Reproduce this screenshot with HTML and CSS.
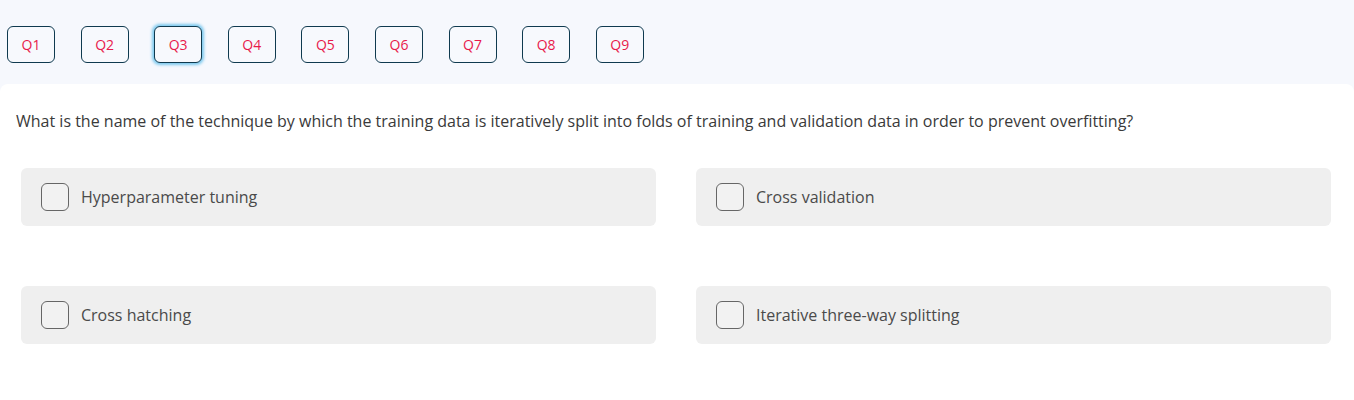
FILE: index.html
```html
<!DOCTYPE html>
<html>
    <head>
        <link rel="stylesheet" href="styles.css">
    </head>

    <body>
        <div class="topbar">
            <button class="qbtn">Q1</button>
            <button class="qbtn">Q2</button>
            <button class="qbtn active">Q3</button>
            <button class="qbtn">Q4</button>
            <button class="qbtn">Q5</button>
            <button class="qbtn">Q6</button>
            <button class="qbtn">Q7</button>
            <button class="qbtn">Q8</button>
            <button class="qbtn">Q9</button>
        </div>

        <div class="panel">
            <div class="question">
                What is the name of the technique by which the training data is iteratively split into folds of training and validation data in order to prevent overfitting?
            </div>
            <div class="options">
                <label class="option"><span class="check"></span>Hyperparameter tuning</label>
                <label class="option"><span class="check"></span>Cross validation</label>
                <label class="option"><span class="check"></span>Cross hatching</label>
                <label class="option"><span class="check"></span>Iterative three-way splitting</label>
            </div>
        </div>
    </body>
</html>
```

FILE: styles.css
```css
html {
    font-family: "Open Sans", sans-serif;
    height: 100%;
}

body {
    margin: 0;
    background: #f6f8fd;
    overflow: hidden;
}

.topbar {
    display: flex;
    gap: 25.6px;
    padding: 26px 7px 21px 7px;
    height: 37px;
}

.qbtn {
    width: 48px;
    height: 37px;
    border: 1px solid #0f3a4f;
    border-radius: 6px;
    background: #f7f9fd;
    color: #e8194b;
    font-family: "Open Sans", sans-serif;
    font-size: 14px;
    padding: 0;
}

.qbtn.active {
    box-shadow: 0 0 3px 2px #7cc9ee;
}

.panel {
    background: #ffffff;
    border-radius: 8px 8px 0 0;
    padding: 24px 23px 0 16px;
    height: 316px;
    box-sizing: border-box;
}

.question {
    font-size: 16px;
    color: #3a3a3a;
    line-height: 26px;
}

.options {
    display: grid;
    grid-template-columns: 1fr 1fr;
    column-gap: 40px;
    row-gap: 60px;
    margin-top: 34px;
    margin-left: 5px;
}

.option {
    display: flex;
    align-items: center;
    gap: 12px;
    height: 58px;
    padding-left: 20px;
    background: #efefef;
    border-radius: 6px;
    font-size: 16px;
    color: #4a4a4a;
}

.check {
    width: 26px;
    height: 26px;
    border: 1px solid #666666;
    border-radius: 6px;
    background: #f2f2f2;
}
```
